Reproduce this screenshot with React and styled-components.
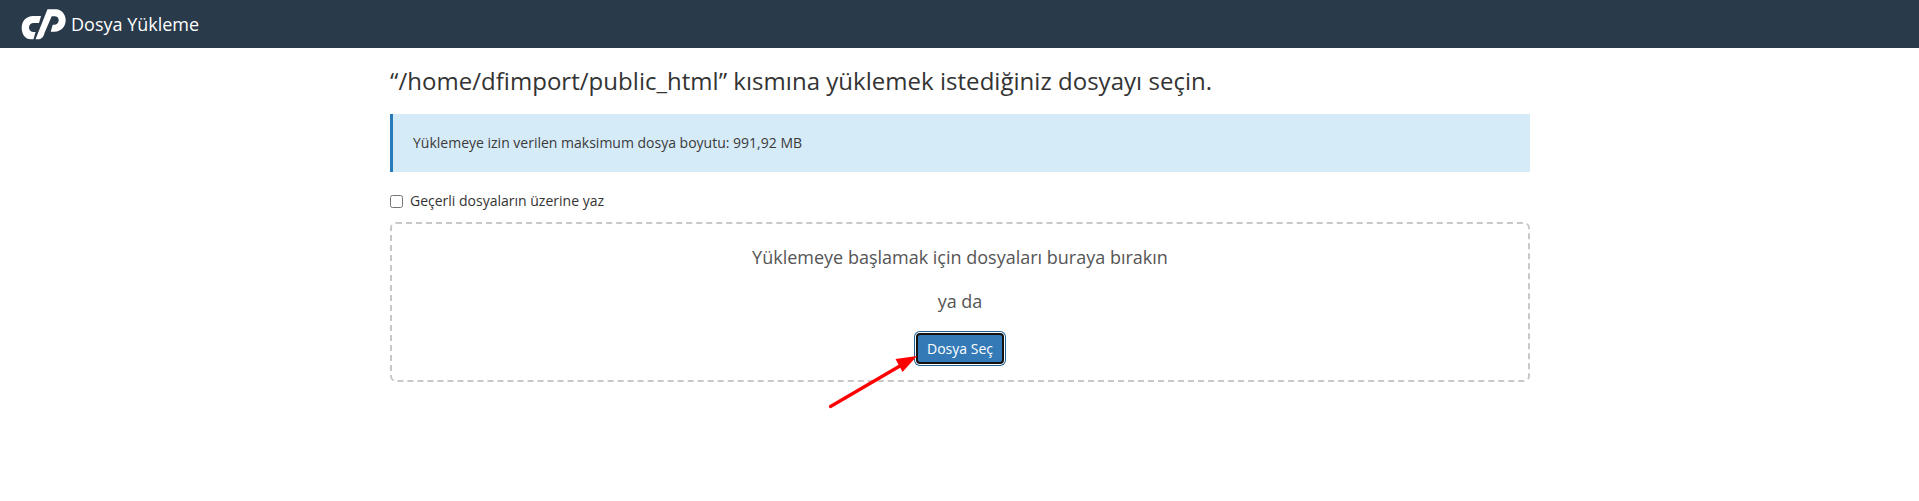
import React from 'react'
import styled, { createGlobalStyle } from 'styled-components'

const Global = createGlobalStyle`
  html, body { margin: 0; padding: 0; background: #fff; }
  body { font-family: "Open Sans", "Liberation Sans", sans-serif; color: #333; font-size: 14px; }
`

const Topbar = styled.header`
  display: flex;
  align-items: center;
  height: 48px;
  padding-left: 21px;
  background: #293a4a;
`

const Logo = styled.svg`
  width: 46px;
  height: 32px;
  margin-right: 4px;
  fill: #fff;
`

const Brand = styled.span`
  color: #fff;
  font-size: 18px;
  line-height: 48px;
`

const Main = styled.main`
  position: relative;
  width: 1140px;
  min-height: 453px;
  margin-left: 390px;
`

const Title = styled.h1`
  margin: 0;
  padding-top: 16px;
  font-size: 24px;
  font-weight: 400;
  line-height: 33px;
  letter-spacing: 0.03px;
  color: #333;
`

const Notice = styled.div`
  box-sizing: border-box;
  margin-top: 17px;
  height: 58px;
  display: flex;
  align-items: center;
  padding: 0 0 2px 20px;
  border-left: 3px solid #2a7ab8;
  background: #d6ebf8;
  font-size: 14px;
  color: #3a3a3a;
`

const CheckRow = styled.label`
  display: flex;
  align-items: center;
  margin-top: 18px;
  height: 20px;
  font-size: 14px;
  color: #333;
`

const Check = styled.input`
  width: 13px;
  height: 13px;
  margin: 2px 7px 0 0;
`

const Drop = styled.section`
  box-sizing: border-box;
  margin-top: 12px;
  height: 160px;
  display: flex;
  flex-direction: column;
  align-items: center;
  padding-top: 21px;
  border: 2px dashed #c8c8c8;
  border-radius: 6px;
  color: #555;
`

const DropText = styled.p`
  margin: 0 0 19px;
  font-size: 18px;
  line-height: 25px;
`

const PickButton = styled.button`
  box-sizing: border-box;
  height: 31px;
  width: 88px;
  padding: 0;
  font-family: inherit;
  font-size: 14px;
  color: #fff;
  background: #337ab7;
  border: 2px solid #111;
  border-radius: 4px;
  box-shadow: 0 0 0 1px #fff, 0 0 0 2px #1f5f96;
`

const Arrow = styled.svg`
  position: absolute;
  left: 435px;
  top: 300px;
  width: 100px;
  height: 70px;
  overflow: visible;
`

const App = () => (
  <>
    <Global />
    <Topbar>
      <Logo viewBox="0 0 46 32">
        <path d="M12 8h8l-2 7h-5.500a4.500 4.500 0 0 0 0 9h2l-2 7.300H10C4 31.300.7 26 .7 19.700.7 13 5.500 8 12 8z" />
        <path d="M26.500 1.300H35c5.500 0 9.700 5 9.700 11 0 6.500-5 11.400-11 11.400h-4l2-7h1.500c2.500 0 4.500-2 4.500-4.500 0-2.500-1.800-4-4-4h-3L23.500 25c-1 4-3 6.300-6.500 6.300h-2.500z" />
      </Logo>
      <Brand>Dosya Yükleme</Brand>
    </Topbar>
    <Main>
      <Title>“/home/dfimport/public_html” kısmına yüklemek istediğiniz dosyayı seçin.</Title>
      <Notice>Yüklemeye izin verilen maksimum dosya boyutu: 991,92 MB</Notice>
      <CheckRow>
        <Check type="checkbox" />
        Geçerli dosyaların üzerine yaz
      </CheckRow>
      <Drop>
        <DropText>Yüklemeye başlamak için dosyaları buraya bırakın</DropText>
        <DropText>ya da</DropText>
        <PickButton>Dosya Seç</PickButton>
      </Drop>
      <Arrow viewBox="0 0 100 70">
        <line x1="5.500" y1="58.500" x2="80" y2="15" stroke="#f00" strokeWidth="3.200" strokeLinecap="round" />
        <polygon points="92,8 70.500,11 77.500,24" fill="#f00" />
      </Arrow>
    </Main>
  </>
)

export default App
